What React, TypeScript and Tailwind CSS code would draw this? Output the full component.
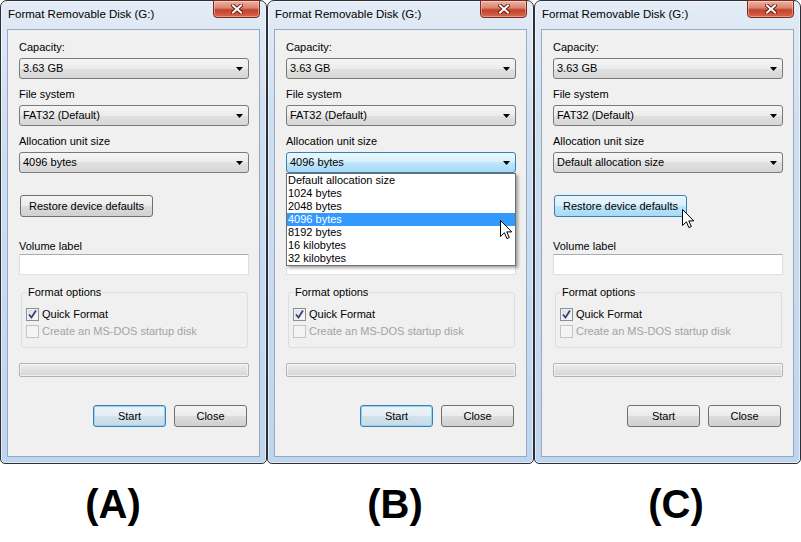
import React from 'react'

type Variant = 'A' | 'B' | 'C'

const ALLOC_SIZES = [
  'Default allocation size',
  '1024 bytes',
  '2048 bytes',
  '4096 bytes',
  '8192 bytes',
  '16 kilobytes',
  '32 kilobytes',
]

function CloseBox() {
  return (
    <div className="-mt-px w-[47px] h-[18px] rounded-b-[4px] border border-[#7d2a1c] bg-[linear-gradient(180deg,#ebb3a5_0%,#dc8571_42%,#c4432a_56%,#d8654d_100%)] shadow-[inset_0_0_0_1px_rgba(255,255,255,0.35)] flex items-center justify-center">
      <svg width="12" height="10" viewBox="0 0 12 10">
        <path d="M2 1.5 L10 8.5 M10 1.5 L2 8.5" stroke="#5a1a10" strokeWidth="3.8" strokeLinecap="square" />
        <path d="M2 1.5 L10 8.5 M10 1.5 L2 8.5" stroke="#ffffff" strokeWidth="2" strokeLinecap="square" />
      </svg>
    </div>
  )
}

function Arrow() {
  return (
    <svg width="7" height="4" viewBox="0 0 7 4">
      <polygon points="0,0 7,0 3.5,4" fill="#000" />
    </svg>
  )
}

function Combo({ value, hot = false, open = false }: { value: string; hot?: boolean; open?: boolean }) {
  return (
    <div className="relative">
      <div
        className={`h-[21px] flex items-center justify-between pl-[3px] pr-[5px] rounded-[3px] border ${
          hot
            ? 'border-[#3c7fb1] bg-[linear-gradient(180deg,#eaf6fd,#d9f0fc_50%,#bee6fd_50%,#a7d9f5)]'
            : 'border-[#7a7a7a] bg-[linear-gradient(180deg,#f5f5f5,#ececec_50%,#e1e1e1_50%,#d6d6d6)]'
        }`}
      >
        <span className="text-[11px] leading-[15px] text-black">{value}</span>
        <Arrow />
      </div>
      {open && (
        <div className="absolute top-full left-0 right-0 z-10 bg-white border border-[#6e6e6e] shadow-[2px_2px_3px_rgba(0,0,0,0.35)]">
          {ALLOC_SIZES.map((s) => (
            <div
              key={s}
              className={`h-[13px] px-[1px] text-[11px] leading-[13px] ${
                s === '4096 bytes' ? 'bg-[#3399ff] text-white' : 'text-black'
              }`}
            >
              {s}
            </div>
          ))}
        </div>
      )}
    </div>
  )
}

function Button({ label, kind = 'normal', className = '' }: { label: string; kind?: 'normal' | 'default' | 'hot'; className?: string }) {
  const look =
    kind === 'hot'
      ? 'border-[#3c7fb1] bg-[linear-gradient(180deg,#eaf6fd,#d9f0fc_50%,#bee6fd_50%,#a7d9f5)]'
      : kind === 'default'
      ? 'border-[#3c7fb1] bg-[linear-gradient(180deg,#eef4f8,#e3edf4_50%,#d3e2ec_50%,#c8dae6)] shadow-[inset_0_0_0_1px_#8fd6f3]'
      : 'border-[#707070] bg-[linear-gradient(180deg,#f4f4f4,#ebebeb_50%,#dddddd_50%,#d0d0d0)]'
  return (
    <div className={`h-[22px] rounded-[3px] border flex items-center justify-center text-[11px] leading-[15px] text-black ${look} ${className}`}>
      {label}
    </div>
  )
}

function Checkbox({ checked = false, disabled = false }: { checked?: boolean; disabled?: boolean }) {
  return (
    <div
      className={`w-[13px] h-[13px] shrink-0 border flex items-center justify-center ${
        disabled
          ? 'border-[#c4c4c4] bg-[#f4f4f4]'
          : 'border-[#8e8f8f] bg-[linear-gradient(135deg,#d9d9d9,#ffffff)] shadow-[inset_0_0_0_1px_#f2f2f2]'
      }`}
    >
      {checked && (
        <svg width="11" height="11" viewBox="0 0 11 11">
          <path d="M2 5.5 L4.5 8.5 L9 1.5" fill="none" stroke="#33447a" strokeWidth="1.8" />
        </svg>
      )}
    </div>
  )
}

function Cursor() {
  return (
    <svg width="13" height="20" viewBox="0 0 13 20">
      <path
        d="M0.5 0.5 V16.5 L4.4 12.8 L6.9 18.6 L9.3 17.6 L6.8 11.9 H11.8 Z"
        fill="#ffffff"
        stroke="#000000"
        strokeWidth="1"
        strokeLinejoin="round"
      />
    </svg>
  )
}

function Label({ children, className = '' }: { children: React.ReactNode; className?: string }) {
  return <div className={`h-[15px] text-[11px] leading-[15px] text-black ${className}`}>{children}</div>
}

function FormatWindow({ v }: { v: Variant }) {
  // in (B) the open list covers the restore button and the volume label
  const covered = v === 'B' ? 'invisible' : ''
  return (
    <div className="relative w-[267px] h-[464px] flex flex-col rounded-t-[7px] rounded-b-[5px] border border-[#2b2f36] bg-[linear-gradient(180deg,#e3ecf6,#cfdff1_25%,#bfd5ee)] shadow-[inset_0_0_0_1px_rgba(255,255,255,0.55)]">
      {/* Title bar */}
      <div className="h-[28px] shrink-0 flex items-start justify-between pl-[7px] pr-[6px]">
        <span className="mt-[6px] text-[11.5px] leading-[15px] text-black">Format Removable Disk (G:)</span>
        <CloseBox />
      </div>

      {/* Client area */}
      <div className="mx-[6px] h-[428px] border border-[#97a9c0] bg-[#f0f0f0] flex flex-col pl-[11px] pr-[10px] pt-[10px]">
        <Label>Capacity:</Label>
        <div className="mt-[3px]">
          <Combo value="3.63 GB" />
        </div>
        <Label className="mt-[8px]">File system</Label>
        <div className="mt-[3px]">
          <Combo value="FAT32 (Default)" />
        </div>
        <Label className="mt-[8px]">Allocation unit size</Label>
        <div className="mt-[3px] relative z-10">
          <Combo
            value={v === 'C' ? 'Default allocation size' : '4096 bytes'}
            hot={v === 'B'}
            open={v === 'B'}
          />
        </div>

        <Button label="Restore device defaults" kind={v === 'C' ? 'hot' : 'normal'} className={`mt-[22px] ml-[1px] w-[133px] ${covered}`} />

        <Label className={`mt-[22px] ${covered}`}>Volume label</Label>
        <div className="h-[21px] bg-white border border-[#dbdfe6] border-t-[#abadb3]" />

        {/* Format options group */}
        <div className="relative mt-[17px] ml-[2px] mr-[1px] h-[56px] rounded-[3px] border border-[#d5dfe5] pl-[4px] pt-[14px]">
          <span className="absolute -top-[8px] left-[5px] px-[1px] bg-[#f0f0f0] text-[11px] leading-[15px] text-black">
            Format options
          </span>
          <div className="h-[15px] flex items-center gap-[3px]">
            <Checkbox checked />
            <span className="text-[11px] leading-[15px] text-black">Quick Format</span>
          </div>
          <div className="mt-[2px] h-[15px] flex items-center gap-[3px]">
            <Checkbox disabled />
            <span className="text-[11px] leading-[15px] text-[#a3a3a3]">Create an MS-DOS startup disk</span>
          </div>
        </div>

        {/* Progress bar */}
        <div className="mt-[15px] h-[14px] rounded-[2px] border border-[#b2b2b2] bg-[linear-gradient(180deg,#eeeeee,#e2e2e2_45%,#d6d6d6)] shadow-[inset_0_0_0_1px_rgba(255,255,255,0.6)]" />

        {/* Buttons */}
        <div className="mt-[28px] flex justify-end gap-[8px] pr-[2px]">
          <Button label="Start" kind={v === 'C' ? 'normal' : 'default'} className="w-[73px]" />
          <Button label="Close" className="w-[73px]" />
        </div>
      </div>

      {v === 'B' && (
        <div className="absolute left-[232px] top-[219px] z-20">
          <Cursor />
        </div>
      )}
      {v === 'C' && (
        <div className="absolute left-[147px] top-[208px] z-20">
          <Cursor />
        </div>
      )}
    </div>
  )
}

export default function App() {
  return (
    <div className="w-[801px] h-[542px] bg-white overflow-hidden font-['Liberation_Sans',Arial,sans-serif]">
      <div className="flex">
        <FormatWindow v="A" />
        <FormatWindow v="B" />
        <FormatWindow v="C" />
      </div>
      <div className="flex pt-[17px] text-[40px] leading-[46px] font-bold text-black">
        <div className="w-[226px] text-center">(A)</div>
        <div className="w-[338px] text-center">(B)</div>
        <div className="w-[224px] text-center">(C)</div>
      </div>
    </div>
  )
}
